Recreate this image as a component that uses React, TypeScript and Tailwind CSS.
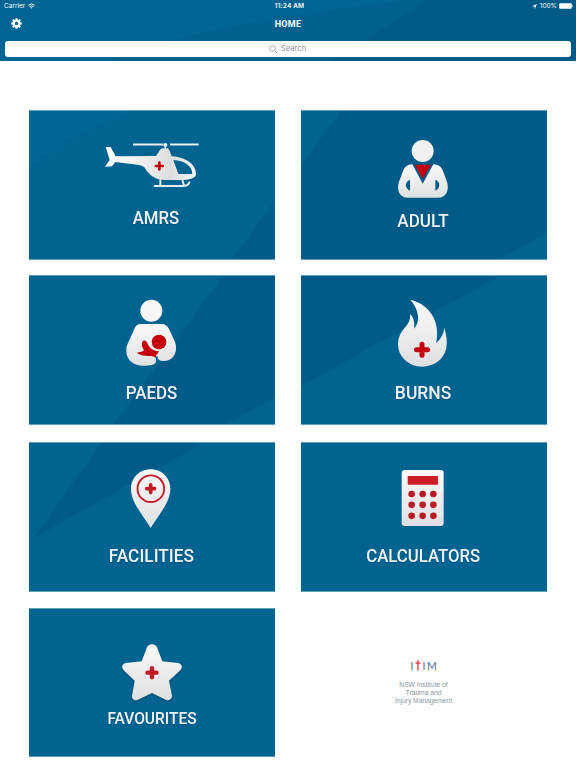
import type { ReactNode } from "react"

type TileProps = {
	label: string
	className: string
	labelClassName: string
	facets?: ReactNode
	children: ReactNode
}

const DARK = "#005b88"
const LIGHT = "#006795"

function Tile({ label, className, labelClassName, facets, children }: TileProps) {
	return (
		<button
			type="button"
			className={`relative flex w-[246px] flex-col items-center border-y border-[#66a1bc] bg-[#006390] ${className}`}
		>
			<svg className="absolute inset-0 h-full w-full" viewBox="0 0 246 148" preserveAspectRatio="none">
				{facets}
			</svg>
			<span className="relative flex shrink-0">{children}</span>
			<span
				className={`relative shrink-0 whitespace-nowrap font-['Roboto',sans-serif] font-medium leading-[18px] text-[#f1f4f6] [text-shadow:0_1px_1px_rgba(0,40,70,0.3)] ${labelClassName}`}
			>
				{label}
			</span>
		</button>
	)
}

function Gradient({ id }: { id: string }) {
	return (
		<defs>
			<linearGradient id={id} x1="0" y1="0" x2="0" y2="1">
				<stop offset="0" stopColor="#fafafa" />
				<stop offset="1" stopColor="#dfe0e2" />
			</linearGradient>
		</defs>
	)
}

function Cross({ x, y, r, w, color = "#c4000c" }: { x: number; y: number; r: number; w: number; color?: string }) {
	const a = r - w / 3
	return (
		<path
			d={`M${x - a} ${y}H${x + a}M${x} ${y - a}V${y + a}`}
			stroke={color}
			strokeWidth={w}
			strokeLinecap="round"
			fill="none"
		/>
	)
}

function HelicopterIcon() {
	return (
		<svg width="96" height="46" viewBox="42 36 288 138">
			<defs>
				<linearGradient id="heli" x1="0" y1="0" x2="1" y2="0">
					<stop offset="0" stopColor="#ffffff" />
					<stop offset="0.4" stopColor="#f0f0f1" />
					<stop offset="0.72" stopColor="#dcdddf" />
					<stop offset="1" stopColor="#f6f6f6" />
				</linearGradient>
			</defs>
			<path d="M129 43.500H220M240 43.500H326" stroke="#eceded" strokeWidth="5.500" />
			<circle cx="226" cy="45" r="6" fill="#f3f3f3" />
			<path d="M226 45V60" stroke="#eceded" strokeWidth="4" />
			<path
				fill="url(#heli)"
				fillRule="evenodd"
				d="M218 55H234C239 61 242 69 245 79C285 81 318 102 318 132C318 145 300 150 270 150H222C190 149 174 130 163 112Q158 107 148 105L76 96L66 109L45 110L59 90L47 51H62L77 79L198 78L210 60Q213 55 218 55ZM250 90L265 132H307C307 108 284 92 250 90Z"
			/>
			<path
				d="M211 149V167M277 149L282 167M194 168H280Q294 168 298 157"
				stroke="#e9eaeb"
				strokeWidth="6"
				strokeLinecap="round"
				fill="none"
			/>
			<Cross x={208} y={108} r={13} w={8} />
		</svg>
	)
}

function AdultIcon() {
	return (
		<svg width="54" height="62" viewBox="48 24 162 186">
			<Gradient id="adult" />
			<circle cx="128" cy="63" r="33" fill="#f1f1f2" />
			<path
				fill="url(#adult)"
				fillRule="evenodd"
				d="M97 103C82 104 75 110 70 121L57 155C49 178 58 203 83 203H174C200 203 208 178 201 155L188 121C183 110 175 104 160 103L128 161ZM90 149C74 155 74 175 90 182ZM166 149C182 155 182 175 166 182Z"
			/>
			<path d="M104 104H153L128 146Z" fill="#c4000c" />
		</svg>
	)
}

function PaedsIcon() {
	return (
		<svg width="54" height="70" viewBox="57 24 162 210">
			<Gradient id="paeds" />
			<circle cx="139" cy="62" r="33" fill="#f6f6f6" />
			<path
				fill="url(#paeds)"
				d="M108 102H168C180 102 187 107 192 117L210 156C220 183 206 213 177 213C163 213 156 207 158 198L150 202C158 210 153 224 138 226C100 232 64 220 64 182C64 171 66 165 70 157L88 117C92 107 97 102 108 102Z"
			/>
			<circle cx="162" cy="156" r="22" fill="#c4000c" />
			<path
				fill="#c4000c"
				d="M112 156C115 149 124 150 127 159C131 170 138 177 147 181Q154 184 162 184Q159 191 154 195L151 203C148 198 140 198 130 198C115 198 103 194 95 188C105 187 114 185 117 181C111 172 109 163 112 156Z"
			/>
		</svg>
	)
}

function FlameIcon() {
	return (
		<svg width="52" height="70" viewBox="48 24 156 210">
			<Gradient id="flame" />
			<path
				fill="url(#flame)"
				d="M91 29C137 39 165 76 170 112C172 130 172 145 168 159C182 147 191 132 193 113C200 138 203 160 198 178C190 210 160 230 127 230C86 230 54 200 54 162C54 144 61 130 73 115C86 99 92 90 90 71C100 80 105 96 102 116C114 102 117 86 112 68C109 54 101 40 91 29Z"
			/>
			<Cross x={126} y={179} r={21.5} w={15} />
		</svg>
	)
}

function PinIcon() {
	return (
		<svg width="44" height="62" viewBox="102 24 132 186">
			<Gradient id="pin" />
			<path
				fill="url(#pin)"
				d="M167 28C134 28 108 53 108 86C108 126 140 160 167 204C194 160 226 126 226 86C226 53 200 28 167 28Z"
			/>
			<circle cx="167.500" cy="86" r="40" fill="none" stroke="#c51b24" strokeWidth="5.500" />
			<Cross x={167} y={86} r={15.5} w={11} color="#c51b24" />
		</svg>
	)
}

function CalculatorIcon() {
	return (
		<svg width="46" height="60" viewBox="135 24 138 180">
			<Gradient id="calc" />
			<rect x="140" y="30" width="126" height="168" rx="9" fill="url(#calc)" />
			<rect x="158" y="48" width="91" height="26" rx="2" fill="#cc1c24" />
			{[102, 134.5, 167.5].map((y) =>
				[170, 203, 235].map((x) => <circle key={`${x}-${y}`} cx={x} cy={y} r="10" fill="#b91c25" />),
			)}
		</svg>
	)
}

function StarIcon() {
	return (
		<svg width="64" height="60" viewBox="75 21 192 180" className="drop-shadow-[0_1px_1px_rgba(0,40,70,0.4)]">
			<Gradient id="star" />
			<path
				fill="url(#star)"
				d="M156 37C161 25 181 25 186 37L202 79L249 84C261 86 264 97 256 106L222 137L231 182C231 194 219 199 209 193L171 174L132 193C121 199 110 194 111 182L119 137L86 106C78 97 81 86 93 84L140 79Z"
			/>
			<Cross x={171} y={113} r={18} w={13} color="#bd1d26" />
		</svg>
	)
}

function GearIcon() {
	return (
		<svg width="11" height="11" viewBox="0 0 22 22" fill="none" stroke="white" className="mb-[6px] ml-px">
			<circle cx="11" cy="11" r="5.600" strokeWidth="4.600" />
			<path
				d="M11 0.500V4M11 18V21.500M0.500 11H4M18 11H21.500M3.600 3.600L6 6M16 16L18.400 18.400M3.600 18.400L6 16M16 6L18.400 3.600"
				strokeWidth="4"
			/>
		</svg>
	)
}

function StatusBar() {
	return (
		<div className="relative grid h-3 grid-cols-3 items-center pl-1 pr-[3px] font-['Inter',sans-serif] text-[6.500px] leading-3 text-white">
			<div className="flex items-center gap-[3px]">
				<span>Carrier</span>
				<svg width="7" height="6" viewBox="0 0 14 11" fill="none" stroke="white" strokeWidth="2">
					<path d="M0.800 4Q7 -1.500 13.200 4M3.200 6.700Q7 3.500 10.800 6.700" />
					<path d="M5 8.500Q7 7 9 8.500L7 10.800Z" fill="white" stroke="none" />
				</svg>
			</div>
			<span className="pl-0.5 text-center font-semibold tracking-[0.150px]">11:24 AM</span>
			<div className="flex items-center justify-end">
				<svg width="5" height="5" viewBox="0 0 10 10" fill="white" className="mr-[3px]">
					<path d="M10 0L5.500 10L4.800 5.200L0 4.500Z" />
				</svg>
				<span>100%</span>
				<svg width="14" height="6" viewBox="0 0 28 12" className="ml-0.5">
					<rect x="0.500" y="0.500" width="25" height="11" rx="2" fill="white" />
					<path d="M26.500 4V8Q28 7.500 28 6T26.500 4Z" fill="white" />
				</svg>
			</div>
		</div>
	)
}

function Header() {
	return (
		<header className="relative h-[61px] bg-[#006592]">
			<svg className="absolute inset-0" width="576" height="61" viewBox="0 0 576 61">
				<path d="M411 0Q280 14 170 40L110 61H576V0Z" fill="#00618e" />
				<path d="M428 0L331 61H576V0Z" fill={DARK} />
			</svg>
			<StatusBar />
			<div className="relative grid h-[29px] grid-cols-3 items-center px-[10px]">
				<GearIcon />
				<h1 className="mb-[5px] text-center font-['Roboto',sans-serif] text-[9px] font-bold leading-3 tracking-[0.250px] text-white">
					HOME
				</h1>
			</div>
			<div className="relative mx-[5px] flex h-4 items-center justify-center gap-[3px] rounded-[3px] bg-white pr-px font-['Inter',sans-serif] text-[7.500px] leading-4 text-[#8e8e93]">
				<svg width="9" height="9" viewBox="0 0 18 18" fill="none" stroke="#8e8e93" strokeWidth="1.500">
					<circle cx="7" cy="7" r="5.500" />
					<path d="M11 11L16.500 16.500" />
				</svg>
				<span className="tracking-[0.100px]">Search</span>
			</div>
		</header>
	)
}

function InstituteLogo() {
	return (
		<div className="flex w-[246px] flex-col items-center pr-px pt-[52px]">
			<div className="flex h-3 items-center gap-[1.500px] font-['Lato',sans-serif] text-[10.500px] leading-3 text-[#4d6c85]">
				<span className="w-[3px]">I</span>
				<svg width="6" height="11" viewBox="0 0 12 22" className="mb-px">
					<path d="M6 0V21M1 6H11" stroke="#ee4a50" strokeWidth="3" />
				</svg>
				<span className="w-[3px]">I</span>
				<span>M</span>
			</div>
			<p className="mt-[9px] text-center font-['Liberation_Sans',sans-serif] text-[6.700px] leading-2 text-[#8796a3]">
				NSW Institute of
				<br />
				Trauma and
				<br />
				Injury Management
			</p>
		</div>
	)
}

export default function App() {
	return (
		<div className="h-[768px] w-[576px] overflow-hidden bg-white">
			<Header />
			<main className="flex flex-col pl-[29px] pt-[49px]">
				<div className="flex gap-[26px]">
					<Tile
						label="AMRS"
						className="h-[150px] pt-[31px]"
						labelClassName="mt-[21px] ml-[7px] scale-x-[0.93] text-[18px]"
						facets={
							<>
								<path d="M0 0H103Q45 22 0 56Z" fill={LIGHT} />
								<path d="M246 90L203 148H246Z" fill={DARK} />
							</>
						}
					>
						<HelicopterIcon />
					</Tile>
					<Tile
						label="ADULT"
						className="h-[150px] pt-[27px] pr-[2px]"
						labelClassName="mt-[12px] scale-x-[0.95] text-[18px]"
						facets={<path d="M40 0L0 54V148H199L246 122V0Z" fill={DARK} />}
					>
						<AdultIcon />
					</Tile>
				</div>
				<div className="mt-[15px] flex gap-[26px]">
					<Tile
						label="PAEDS"
						className="h-[150px] pt-[22px] pr-[2px]"
						labelClassName="mt-[16px] scale-x-[0.94] text-[18px]"
						facets={<path d="M194 0L85 148H198L246 121V0Z" fill={DARK} />}
					>
						<PaedsIcon />
					</Tile>
					<Tile
						label="BURNS"
						className="h-[150px] pt-[22px] pr-[5px]"
						labelClassName="mt-[16px] ml-[3px] scale-x-[0.97] text-[18px]"
						facets={<path d="M0 0H198L0 110Z" fill={DARK} />}
					>
						<FlameIcon />
					</Tile>
				</div>
				<div className="mt-[17px] flex gap-[26px]">
					<Tile
						label="FACILITIES"
						className="h-[150px] pt-[25px] pr-[2px]"
						labelClassName="mt-[17px] scale-x-[0.96] text-[18px]"
						facets={<path d="M72 0H174L5 95Z" fill={DARK} />}
					>
						<PinIcon />
					</Tile>
					<Tile
						label="CALCULATORS"
						className="h-[150px] pt-[25px] pr-[2px]"
						labelClassName="mt-[19px] scale-x-[0.93] text-[18px]"
					>
						<CalculatorIcon />
					</Tile>
				</div>
				<div className="mt-[16px] flex gap-[26px]">
					<Tile
						label="FAVOURITES"
						className="h-[149px] pt-[33px]"
						labelClassName="mt-[8px] scale-x-[0.97] text-[16px]"
					>
						<StarIcon />
					</Tile>
					<InstituteLogo />
				</div>
			</main>
		</div>
	)
}
